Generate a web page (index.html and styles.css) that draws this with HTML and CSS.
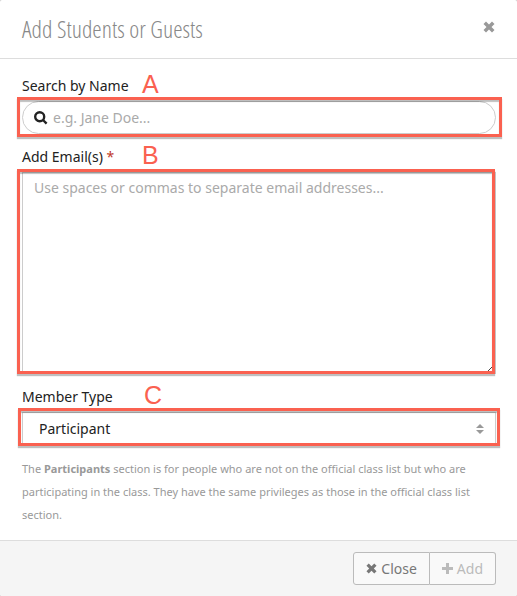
FILE: index.html
```html
<!DOCTYPE html>
<html lang="en">
<head>
    <meta charset="UTF-8">
    <meta name="viewport" content="width=device-width, initial-scale=1.0">
    <title>Add Students or Guests</title>
    <link rel="stylesheet" href="styles.css">
</head>
<body>
    <form class="modal">
        <div class="modal-header">
            <h1>Add Students or Guests</h1>
            <button type="button" class="dismiss" aria-label="Close dialog">
                <svg class="icon" width="12" height="12" viewBox="0 0 12 12"><path d="M3 0.5 L6 3.5 L9 0.5 L11.5 3 L8.5 6 L11.5 9 L9 11.5 L6 8.5 L3 11.5 L0.5 9 L3.5 6 L0.5 3 Z"/></svg>
            </button>
        </div>

        <div class="modal-body">
            <div class="field">
                <label for="search">Search by Name</label>
                <span class="marker marker-a">A</span>
                <div class="control">
                    <svg class="search-icon" width="14" height="14" viewBox="0 0 14 14"><circle cx="5.7" cy="5.7" r="4.5"/><path d="M9 9 L12.6 12.6"/></svg>
                    <input type="text" id="search" class="search" placeholder="e.g. Jane Doe...">
                    <span class="callout callout-search"></span>
                </div>
            </div>

            <div class="field">
                <label for="emails">Add Email(s) <span class="required">*</span></label>
                <span class="marker marker-b">B</span>
                <div class="control">
                    <textarea id="emails" placeholder="Use spaces or commas to separate email addresses..."></textarea>
                    <svg class="grip" width="4" height="4" viewBox="0 0 4 4"><path d="M0 4 L4 0"/></svg>
                    <span class="callout callout-emails"></span>
                </div>
            </div>

            <div class="field">
                <label for="type">Member Type</label>
                <span class="marker marker-c">C</span>
                <div class="control">
                    <select id="type">
                        <option>Participant</option>
                    </select>
                    <svg class="sort-icon" width="8" height="10" viewBox="0 0 8 10"><path d="M0 4 L4 0 L8 4 Z M0 6 L8 6 L4 10 Z"/></svg>
                    <span class="callout callout-type"></span>
                </div>
            </div>

            <p class="help">The <strong>Participants</strong> section is for people who are not on the official class list but who are participating in the class. They have the same privileges as those in the official class list section.</p>
        </div>

        <div class="modal-footer">
            <button type="button" class="btn btn-close">
                <svg class="icon" width="11" height="11" viewBox="0 0 12 12"><path d="M3 0.5 L6 3.5 L9 0.5 L11.5 3 L8.5 6 L11.5 9 L9 11.5 L6 8.5 L3 11.5 L0.5 9 L3.5 6 L0.5 3 Z"/></svg>
                Close
            </button>
            <button type="submit" class="btn btn-add" disabled>
                <svg class="icon" width="11" height="11" viewBox="0 0 11 11"><path d="M4 0 H7 V4 H11 V7 H7 V11 H4 V7 H0 V4 H4 Z"/></svg>
                Add
            </button>
        </div>
    </form>
</body>
</html>
```
FILE: styles.css
```css
* {
    box-sizing: border-box;
}
body {
    margin: 0;
    background: #c8c8c8;
    font-family: "Noto Sans", "Open Sans", sans-serif;
    font-size: 14px;
    color: #222;
}
.modal {
    min-height: 100vh;
    display: flex;
    flex-direction: column;
    background: #fff;
    border-radius: 2px;
    overflow: hidden;
}
.modal-header {
    display: flex;
    justify-content: space-between;
    align-items: center;
    height: 59px;
    padding: 0 22px;
    border-bottom: 1px solid #ddd;
}
.modal-header h1 {
    margin: 0;
    font-family: "Open Sans Condensed Light", "Open Sans Condensed", "Open Sans", sans-serif;
    font-size: 24px;
    font-weight: 300;
    line-height: 32px;
    color: #888;
}
.dismiss {
    display: flex;
    margin-bottom: 4px;
    padding: 0;
    border: none;
    background: none;
    color: #999;
    cursor: pointer;
}
.icon {
    fill: currentColor;
}
.modal-body {
    flex: 1;
    padding: 12px 21px 14px 22px;
}
.field {
    position: relative;
    margin-bottom: 8px;
}
.field label {
    display: block;
    line-height: 30px;
}
.required {
    color: #c0392b;
}
.control {
    position: relative;
}
input, textarea, select {
    display: block;
    width: 100%;
    border: 1px solid #ccc;
    background: #fff;
    color: #222;
    font: inherit;
    outline: none;
}
input::placeholder, textarea::placeholder {
    color: #aaa;
    opacity: 1;
}
.search {
    height: 33px;
    padding: 0 16px 0 30px;
    border-radius: 17px;
}
.search-icon {
    position: absolute;
    left: 12px;
    top: 10px;
    fill: none;
    stroke: #222;
    stroke-width: 2.4;
}
textarea {
    height: 202px;
    padding: 5px 11px;
    line-height: 20px;
    resize: none;
}
.grip {
    position: absolute;
    right: 4px;
    bottom: 3px;
    stroke: #444;
}
select {
    height: 33px;
    padding: 0 16px;
    appearance: none;
}
.sort-icon {
    position: absolute;
    right: 12px;
    top: 12px;
    fill: #999;
    pointer-events: none;
}

/* annotations */
.callout {
    position: absolute;
    border: 3px solid #fa6150;
    box-shadow: 0 2px 1px rgba(0, 0, 0, 0.25), inset 0 2px 1px rgba(0, 0, 0, 0.25);
    pointer-events: none;
}
.callout-search {
    inset: -4px -6px -3px -5px;
}
.callout-emails {
    inset: -3px 1px 0 -5px;
}
.callout-type {
    inset: -4px -4px -1px -4px;
}
.marker {
    position: absolute;
    top: -2px;
    font-family: "Liberation Sans", Arial, sans-serif;
    font-size: 25px;
    line-height: 30px;
    color: #fa6150;
}
.marker-a {
    left: 120px;
}
.marker-b {
    left: 120px;
}
.marker-c {
    left: 122px;
}

.help {
    margin: 12px 0 0;
    font-size: 11px;
    line-height: 23px;
    color: #999;
}
.modal-footer {
    display: flex;
    justify-content: flex-end;
    padding: 11px 21px;
    border-top: 1px solid #ddd;
    background: #f5f5f5;
}
.btn {
    display: flex;
    align-items: center;
    gap: 4px;
    height: 33px;
    padding: 0 12px;
    border: 1px solid #bbb;
    background: #f9f9f9;
    font: inherit;
    color: #777;
    cursor: pointer;
}
.btn-close {
    border-radius: 3px 0 0 3px;
}
.btn-add {
    border-left: none;
    border-radius: 0 3px 3px 0;
    color: #bbb;
}
```
